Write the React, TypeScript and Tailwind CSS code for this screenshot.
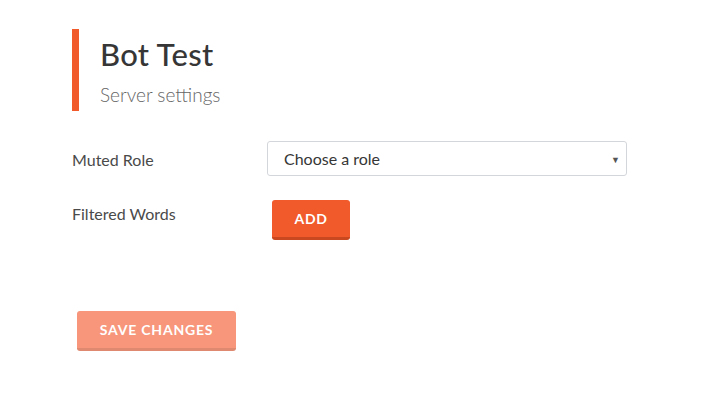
import React from "react";

export default function App() {
  return (
    <div className="min-h-[401px] w-full bg-white" style={{ fontFamily: "Lato, 'Open Sans', sans-serif" }}>
      <div className="pl-[72px] pt-[29px] pr-[75px]">
        <div className="border-l-[7px] border-[#f15a2b] pl-[21px] h-[82px] flex flex-col">
          <h1 className="text-[31px] leading-none font-medium tracking-[0.3px] text-[#363636] mt-[10px]">Bot Test</h1>
          <p className="text-[19px] leading-none font-light text-[#666] mt-[15px]">Server settings</p>
        </div>

        <div className="mt-[30px] flex items-center">
          <label className="w-[195px] text-[16px] text-[#4a4a4a] mt-[2px]">Muted Role</label>
          <div className="relative w-[360px] h-[35px] border border-[#d3d6db] rounded-[3px] flex items-center pl-[16px]">
            <span className="text-[16px] text-[#363636]">Choose a role</span>
            <span className="absolute right-[6px] top-[11px] text-[9px] text-[#555]">▼</span>
          </div>
        </div>

        <div className="mt-[24px] flex items-start">
          <label className="w-[195px] text-[16px] text-[#4a4a4a] mt-[2px]">Filtered Words</label>
          <button className="ml-[5px] w-[78px] h-[40px] rounded-[3px] bg-[#f15a2b] border-b-[3px] border-[#c9481f] text-white text-[14px] font-bold tracking-[0.6px]">
            ADD
          </button>
        </div>

        <div className="mt-[71px] pl-[5px]">
          <button className="w-[159px] h-[40px] rounded-[3px] bg-[#f7967a] border-b-[3px] border-[#df8a70] text-white text-[14px] font-bold tracking-[0.8px]">
            SAVE CHANGES
          </button>
        </div>
      </div>
    </div>
  );
}
